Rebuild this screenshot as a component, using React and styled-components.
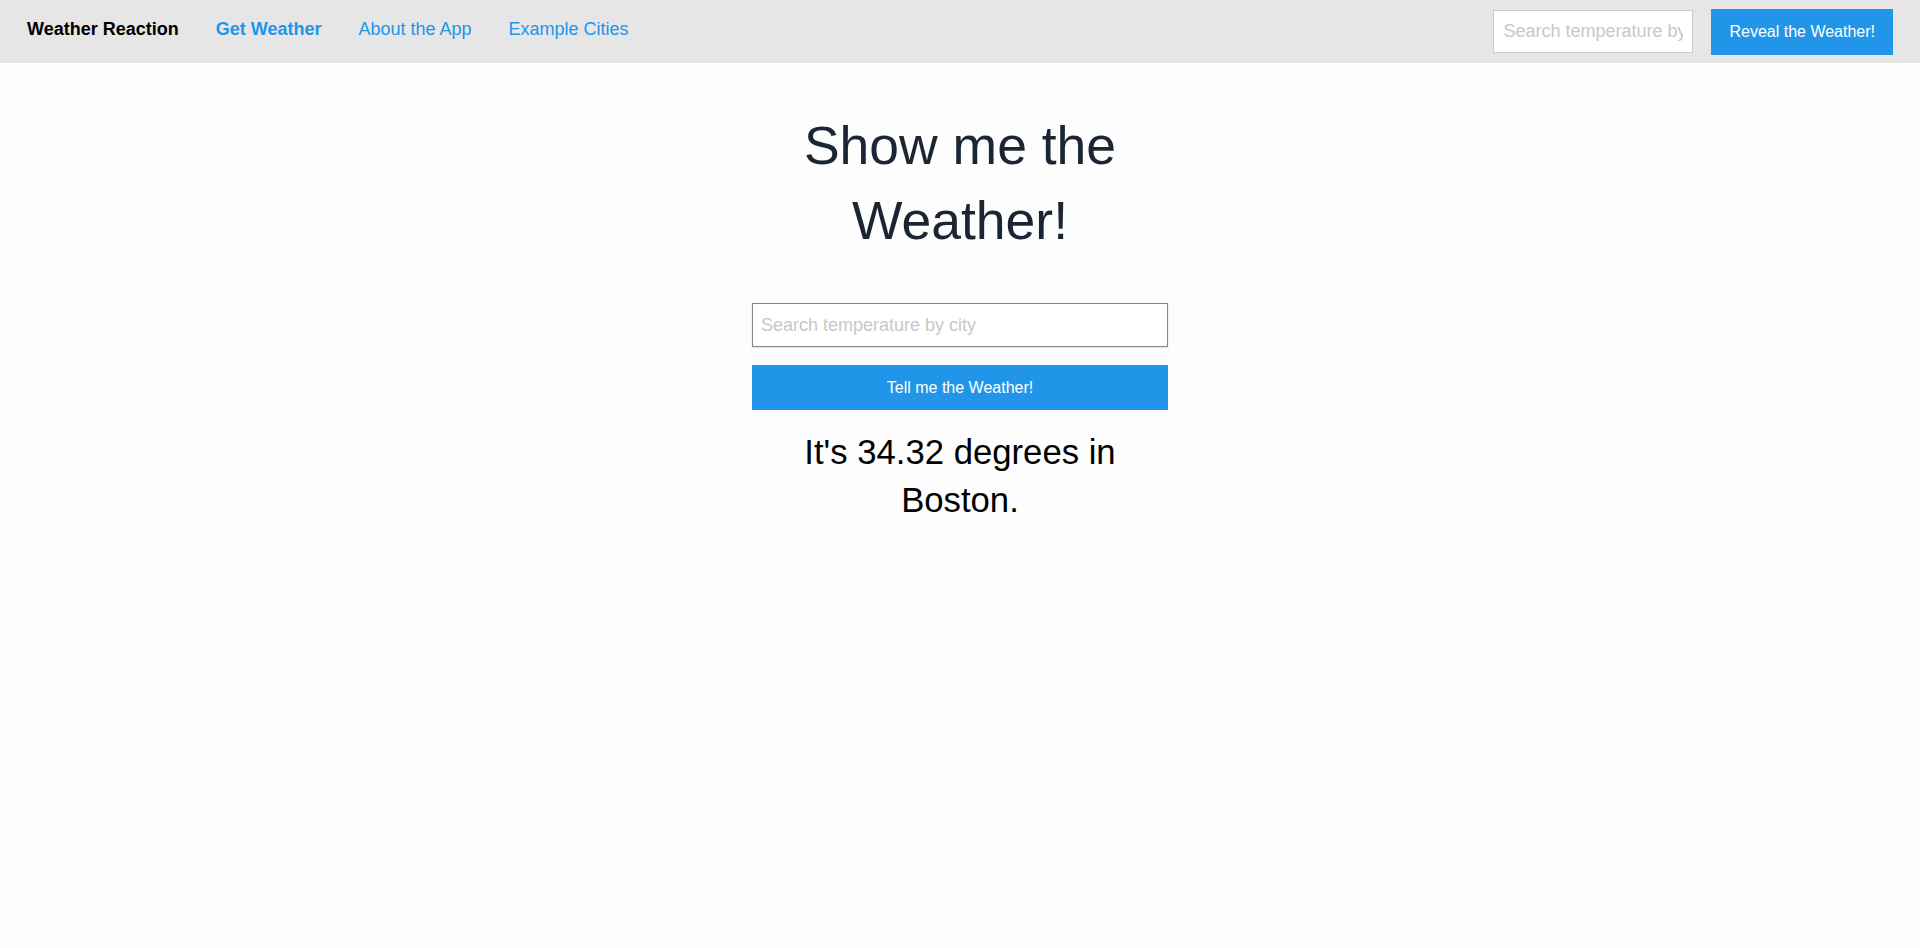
import React from "react";
import styled, { createGlobalStyle } from "styled-components";

const GlobalStyle = createGlobalStyle`
  html, body {
    margin: 0;
    padding: 0;
    background: #fdfdfd;
    font-family: "Liberation Sans", Arial, sans-serif;
  }
  * { box-sizing: border-box; }
`;

const Page = styled.div`
  min-height: 948px;
  background: #fdfdfd;
`;

const NavBar = styled.nav`
  height: 63px;
  background: #e6e6e6;
  display: flex;
  align-items: center;
  justify-content: space-between;
  padding: 0 27px;
`;

const NavLeft = styled.div`
  display: flex;
  align-items: center;
  gap: 37px;
  padding-bottom: 4px;
`;

const Brand = styled.span`
  font-size: 18px;
  font-weight: 700;
  color: #000;
`;

const NavLink = styled.a`
  font-size: 18px;
  font-weight: ${(p) => (p.$active ? 700 : 400)};
  color: #2196e8;
  text-decoration: none;
  cursor: pointer;
`;

const NavRight = styled.form`
  display: flex;
  align-items: center;
  gap: 18px;
`;

const NavInput = styled.input`
  width: 200px;
  height: 43px;
  border: 1px solid #cccccc;
  background: #fff;
  padding: 0 9px;
  font-family: "Liberation Sans", Arial, sans-serif;
  font-size: 18px;
  color: #333;
  outline: none;
  &::placeholder { color: #c8c8c8; }
`;

const BlueButton = styled.button`
  background: #2196e8;
  color: #fff;
  border: none;
  font-family: "Liberation Sans", Arial, sans-serif;
  font-size: 16px;
  cursor: pointer;
  height: ${(p) => p.$h || "46px"};
  width: ${(p) => (p.$full ? "100%" : "auto")};
  padding: 0 18px;
`;

const Main = styled.main`
  width: 416px;
  margin: 0 auto;
  display: flex;
  flex-direction: column;
  align-items: stretch;
  text-align: center;
`;

const Heading = styled.h1`
  margin: 45px 0 0;
  font-size: 53.5px;
  line-height: 75px;
  font-weight: 400;
  color: #1b2533;
`;

const CityInput = styled.input`
  margin-top: 45px;
  height: 44px;
  width: 100%;
  border: 1px solid #858585;
  box-shadow: 0 1px 2px rgba(0, 0, 0, 0.12);
  background: #fff;
  padding: 0 8px;
  font-family: "Liberation Sans", Arial, sans-serif;
  font-size: 18px;
  color: #222;
  caret-color: #000;
  outline: none;
  &::placeholder { color: #c8c8c8; }
`;

const SubmitRow = styled.div`
  margin-top: 18px;
  display: flex;
`;

const Result = styled.p`
  margin: 18px 0 0;
  font-size: 34.7px;
  line-height: 48px;
  color: #000;
`;

export default function App() {
  return (
    <Page>
      <GlobalStyle />
      <NavBar>
        <NavLeft>
          <Brand>Weather Reaction</Brand>
          <NavLink $active>Get Weather</NavLink>
          <NavLink>About the App</NavLink>
          <NavLink>Example Cities</NavLink>
        </NavLeft>
        <NavRight onSubmit={(e) => e.preventDefault()}>
          <NavInput placeholder="Search temperature by city" />
          <BlueButton type="submit" $h="46px">Reveal the Weather!</BlueButton>
        </NavRight>
      </NavBar>
      <Main>
        <Heading>Show me the Weather!</Heading>
        <CityInput autoFocus placeholder="Search temperature by city" />
        <SubmitRow>
          <BlueButton $full $h="45px">Tell me the Weather!</BlueButton>
        </SubmitRow>
        <Result>It's 34.32 degrees in Boston.</Result>
      </Main>
    </Page>
  );
}
